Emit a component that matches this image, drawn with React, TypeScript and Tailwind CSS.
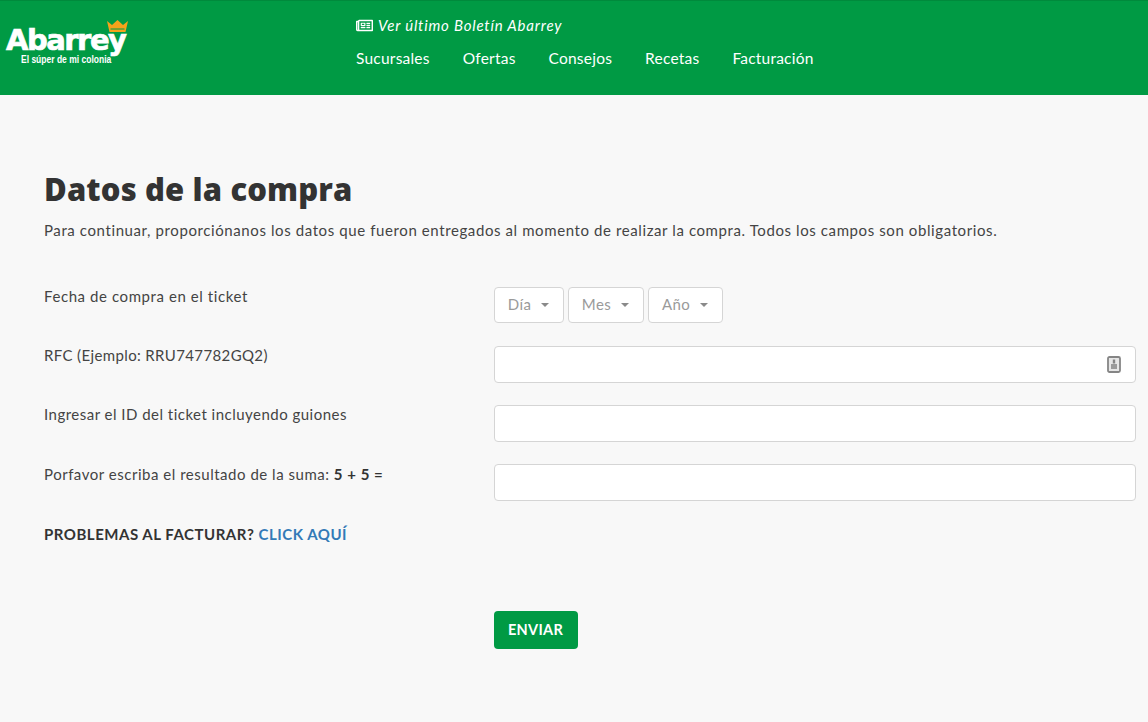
import { FaRegNewspaper } from "react-icons/fa";

const navLinks = ["Sucursales", "Ofertas", "Consejos", "Recetas", "Facturación"];

function Logo() {
  return (
    <div className="relative w-[124px] h-[46px] text-white">
      <span className="absolute left-[1px] top-[6px] font-['DejaVu_Sans'] font-bold text-[29px] leading-[28px] tracking-[-1.5px] [-webkit-text-stroke:0.7px_white]">
        Abarrey
      </span>
      <span className="absolute left-[16px] top-[34px] font-['Liberation_Sans'] font-bold text-[10px] leading-[12px] whitespace-nowrap scale-x-[0.85] origin-left">
        El súper de mi colonia
      </span>
      <svg className="absolute left-[102px] top-0" width="21" height="13" viewBox="0 0 21 13">
        <path d="M0 1 L5 5 L10.5 0 L16 5 L21 1 L18.5 12 L2.5 12 Z" fill="#f5a21b" />
        <path d="M3.5 9 L17.5 9" stroke="#009a44" strokeWidth="1" />
      </svg>
    </div>
  );
}

function DateSelect({ label, width }: { label: string; width: string }) {
  return (
    <button className={`${width} h-[36px] pb-[2px] pr-[1px] bg-white border border-[#d5d5d5] rounded-[4px] flex items-center justify-center gap-[10px] text-[15px] tracking-[0.4px] text-[#9a9a9a]`}>
      {label}
      <span className="w-0 h-0 mt-[2px] border-x-[4px] border-x-transparent border-t-[4px] border-t-[#8a8a8a]" />
    </button>
  );
}

function Field({ label, icon, tracking }: { label: React.ReactNode; icon?: boolean; tracking: string }) {
  return (
    <div className="grid grid-cols-[450px_1fr] h-[37px]">
      <label className={`text-[15px] leading-[18px] text-[#444] ${tracking}`}>{label}</label>
      <div className="relative h-[37px] bg-white border border-[#d5d5d5] rounded-[4px]">
        {icon && (
          <svg className="absolute right-[14px] top-[9px]" width="14" height="17" viewBox="0 0 14 17">
            <rect x="1" y="1" width="12" height="15" rx="1.5" fill="#e6e6e6" stroke="#858585" strokeWidth="1.8" />
            <rect x="5.8" y="3.5" width="2.4" height="4" fill="#858585" />
            <rect x="4" y="8" width="6" height="5" fill="#9a9a9a" />
          </svg>
        )}
      </div>
    </div>
  );
}

export default function App() {
  return (
    <div className="min-h-[722px] bg-[#f8f8f8] font-['Lato',sans-serif] text-[#333]">
      <header className="h-[95px] bg-[#009a44] border-t border-[#008a3c] flex">
        <div className="w-[351px] pl-[5px] pt-[19px]">
          <Logo />
        </div>
        <div className="pt-[14px] pl-[5px] text-white">
          <div className="flex items-center gap-[5px] h-[20px] text-[15px] italic">
            <FaRegNewspaper size={17} />
            <span className="tracking-[0.8px]">Ver último Boletín Abarrey</span>
          </div>
          <nav className="flex gap-[33px] mt-[13px] text-[15.5px] leading-[20px] tracking-[0.22px]">
            {navLinks.map((link) => (
              <a key={link}>{link}</a>
            ))}
          </nav>
        </div>
      </header>

      <main className="pl-[44px] pr-[12px] pt-[74px]">
        <h1 className="font-['Open_Sans'] text-[31px] font-extrabold leading-[40px] tracking-[0.14px] text-[#333]">Datos de la compra</h1>
        <p className="mt-[11px] text-[15px] leading-[20px] tracking-[0.6px] text-[#444]">
          Para continuar, proporciónanos los datos que fueron entregados al momento de realizar la compra. Todos los campos son obligatorios.
        </p>

        <div className="mt-[47px] grid grid-cols-[450px_1fr] h-[36px]">
          <label className="text-[15px] leading-[18px] tracking-[0.58px] text-[#444]">Fecha de compra en el ticket</label>
          <div className="flex gap-[4px]">
            <DateSelect label="Día" width="w-[70px]" />
            <DateSelect label="Mes" width="w-[76px]" />
            <DateSelect label="Año" width="w-[75px]" />
          </div>
        </div>

        <div className="mt-[23px] flex flex-col gap-[22px]">
          <Field label="RFC (Ejemplo: RRU747782GQ2)" icon tracking="tracking-[0.37px]" />
          <Field label="Ingresar el ID del ticket incluyendo guiones" tracking="tracking-[0.48px]" />
          <Field
            label={<span className="relative top-[1px]">Porfavor escriba el resultado de la suma: <b className="text-[#333]">5 + 5 =</b></span>}
            tracking="tracking-[0.52px]"
          />
        </div>

        <p className="mt-[23px] text-[15px] leading-[20px] font-bold tracking-[0.52px] text-[#333]">
          PROBLEMAS AL FACTURAR? <a className="text-[#337ab7]">CLICK AQUÍ</a>
        </p>

        <div className="mt-[67px] pl-[450px]">
          <button className="w-[84px] h-[38px] pr-[1px] bg-[#009a44] rounded-[4px] text-white font-bold text-[14.5px] tracking-[0.3px]">ENVIAR</button>
        </div>
      </main>
    </div>
  );
}
